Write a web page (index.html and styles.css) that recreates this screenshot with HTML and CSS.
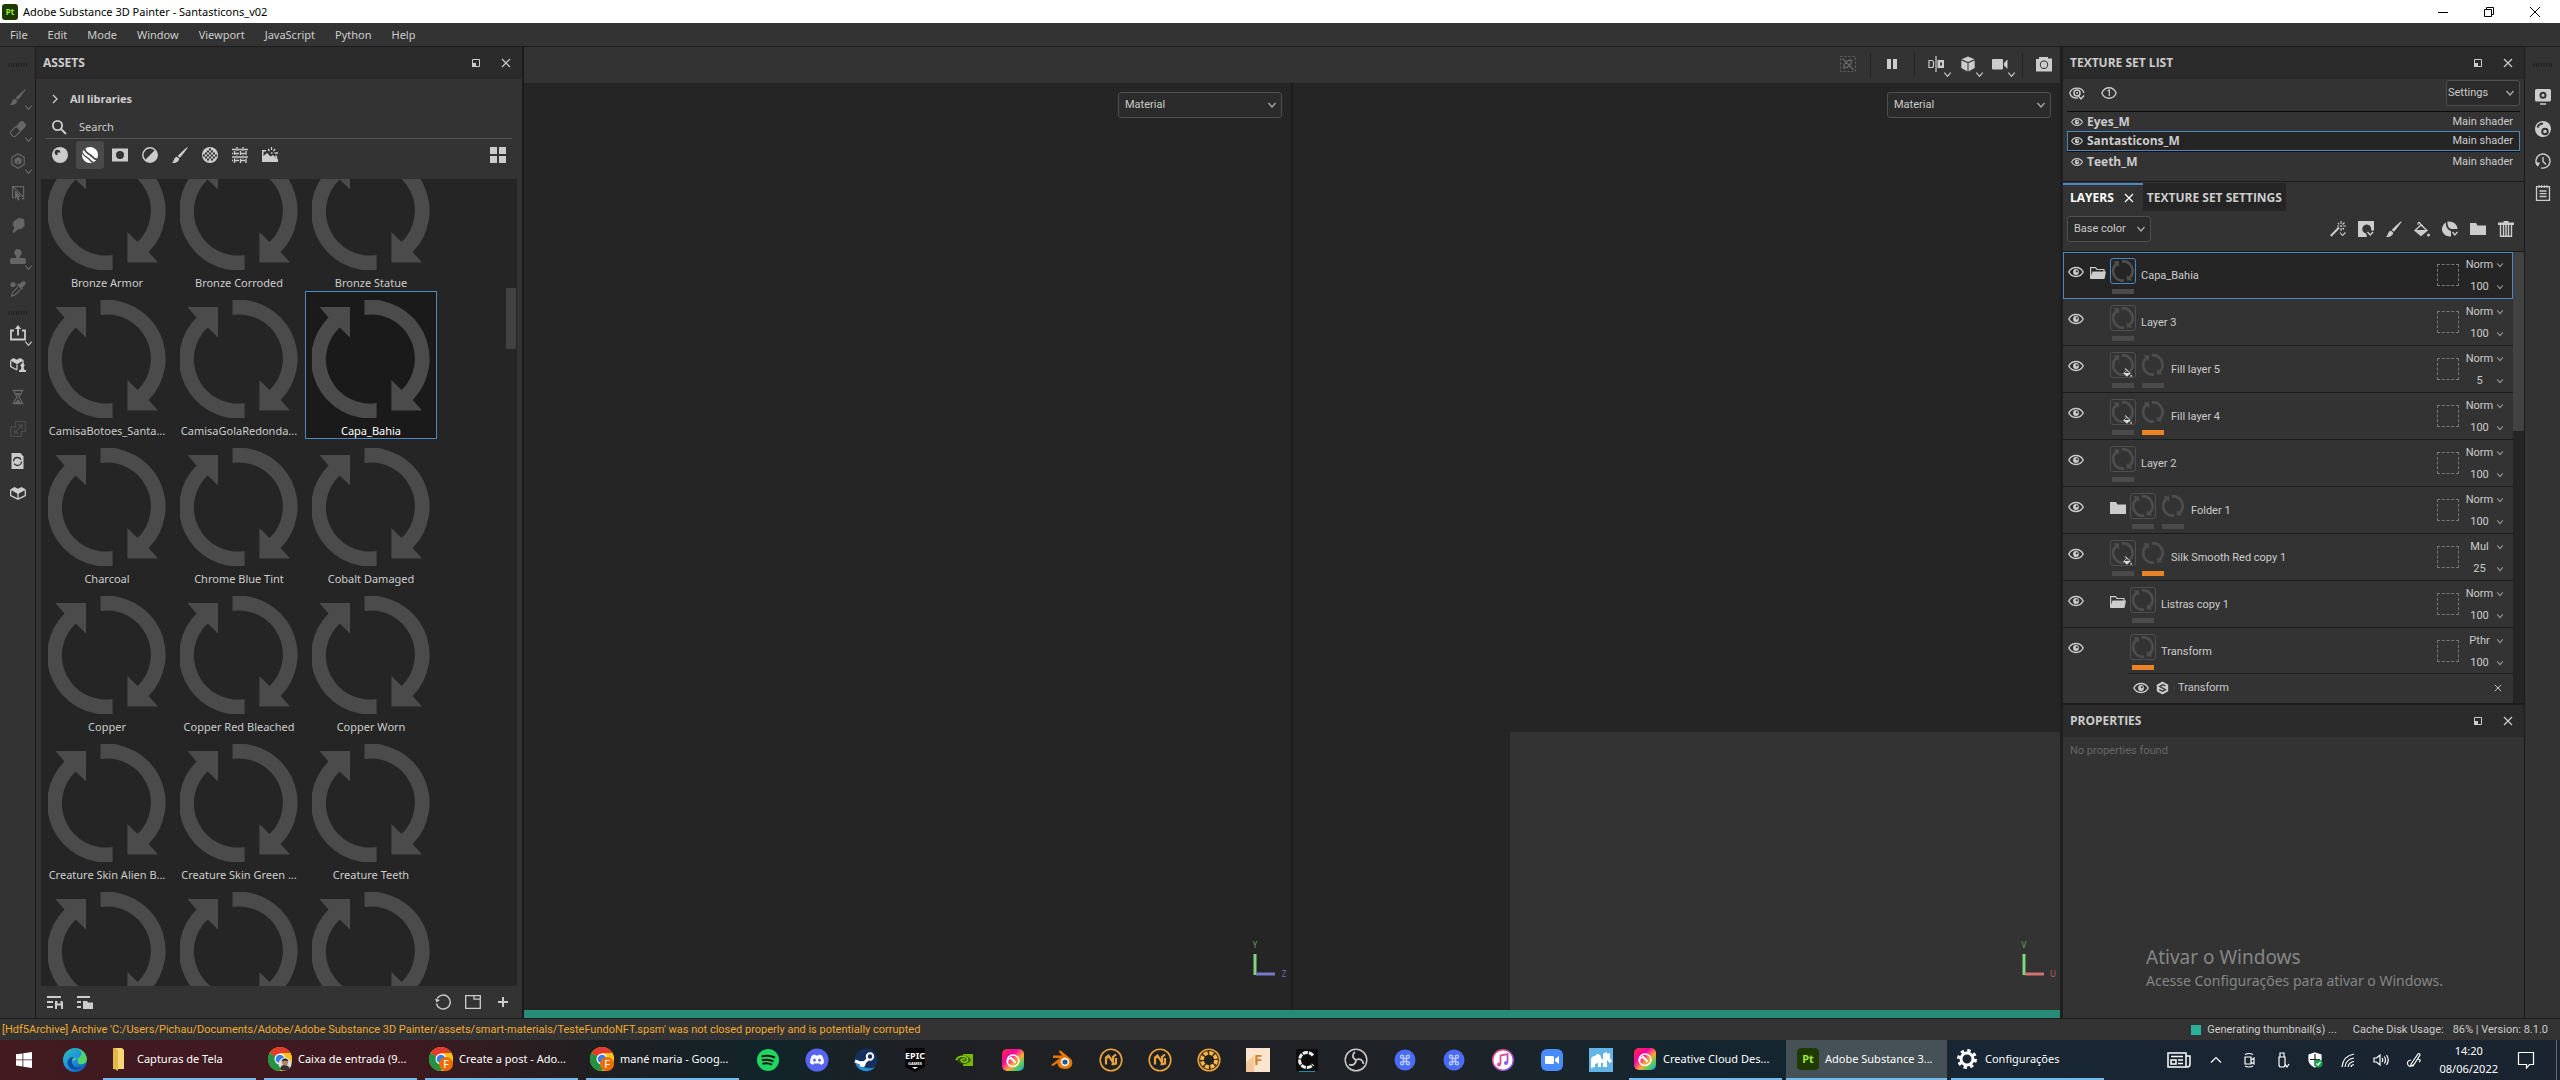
FILE: index.html
```html
<!DOCTYPE html>
<html lang="en">
<head>
  <meta charset="UTF-8" />
  <meta name="viewport" content="width=device-width, initial-scale=1.0"/>
  <title>Adobe Substance 3D Painter - Santasticons_v02</title>
  <link rel="stylesheet" href="styles.css">
</head>
<body>
  <!-- icon sprite -->
  <svg class="sprite" aria-hidden="true">
    <symbol id="i-load" viewBox="0 0 118 118"><path fill="currentColor" d="M52.5 0A59 59 0 0 1 100.7 100L110 110.5H79.4V80L89.6 90A44 44 0 0 0 52.5 15ZM64.6 118A59 59 0 0 1 16.5 17.5L7.5 7H38V37.5L27.7 27.5A44 44 0 0 0 64.6 103Z"/></symbol>
    <symbol id="i-chev" viewBox="0 0 10 10"><path d="M1.5 3l3.5 4 3.500-4" fill="none" stroke="currentColor" stroke-width="1.300"/></symbol>
    <symbol id="i-right" viewBox="0 0 10 10"><path d="M3 1l4 4-4 4" fill="none" stroke="currentColor" stroke-width="1.300"/></symbol>
    <symbol id="i-x" viewBox="0 0 10 10"><path d="M1 1l8 8M9 1l-8 8" fill="none" stroke="currentColor" stroke-width="1.200"/></symbol>
    <symbol id="i-float" viewBox="0 0 10 10"><path d="M1.500 1.500h7v7h-7z" fill="none" stroke="currentColor"/><path d="M1 5h4v4H1z" fill="currentColor"/></symbol>
    <symbol id="i-dots" viewBox="0 0 20 6"><path d="M1 0v4M3.500 0v4M6 0v4M8.500 0v4M11 0v4M13.500 0v4M16 0v4M18.500 0v4" stroke="#1f1f1f"/></symbol>
    <symbol id="i-brush" viewBox="0 0 16 16"><path fill="currentColor" d="M15.800.3c.4.4-6.300 9.200-8 10.500L5.800 9C7 7.200 15.200-.3 15.800.3zM5 9.700l2.200 2C7 15 3 16.500 0 15.700c2.200-1 1.600-5.600 5-6z"/></symbol>
    <symbol id="i-eraser" viewBox="0 0 16 16"><path fill="currentColor" d="M10.500.6a2.200 2.200 0 0 1 3 0l2 2.200a2.200 2.200 0 0 1 0 3l-4.700 5L5.600 5.500z"/><path d="M5.600 5.500L.9 10.400a1.800 1.800 0 0 0 0 2.500l2 2.200a1.800 1.800 0 0 0 2.600 0l5-4.800" fill="none" stroke="currentColor" stroke-width="1.200"/></symbol>
    <symbol id="i-proj" viewBox="0 0 16 16"><path d="M8 .8l6.200 3.600v7.200L8 15.200l-6.200-3.600V4.400z" fill="none" stroke="currentColor" stroke-width="1.200"/><path d="M8 4l3.500 2v4L8 12l-3.500-2V6z" fill="currentColor"/><path d="M8 8V12" stroke="#333"/></symbol>
    <symbol id="i-poly" viewBox="0 0 16 16"><path d="M4.500 12.500H2.600V1.600h11v12h-2M2.600 1.600l11 10.500" fill="none" stroke="currentColor" stroke-width="1.200"/><path d="M5 5.500l6.500 6.300-3 .3L9.500 15l-1.500.6-1.300-3L5 14z" fill="currentColor"/></symbol>
    <symbol id="i-smudge" viewBox="0 0 16 16"><path fill="currentColor" d="M3.500 4.500L8 1.500l1-1 1.200 1 1.600-.5.6 1 1.300-.2.600 1.700.2 5.500-3.200 3-3 .2L4 15.800l-1.700-.6L4.500 10.500 2.500 8z"/></symbol>
    <symbol id="i-stamp" viewBox="0 0 16 16"><path fill="currentColor" d="M8 0a3.700 3.700 0 0 1 2.400 6.500c-.8.800-.8 1.500-.5 2.500H14c1.500 0 2 1 2 2v1H0v-1c0-1 .5-2 2-2h4.100c.3-1 .3-1.700-.5-2.500A3.700 3.700 0 0 1 8 0zM0 12h16v1.500l-1 1.500H1l-1-1.500z"/></symbol>
    <symbol id="i-pick" viewBox="0 0 16 16"><circle cx="3" cy="3.500" r="2.600" fill="currentColor"/><path fill="currentColor" d="M12 .8c3-1.800 4.600 1.500 3 3.200l-2.600 2.500.8.900-1.400 1.300-5-5L8.200 2.500l1 .8z"/><path d="M8 6L2.500 11.500l-1 3.500 3.400-1L10.500 8.500" fill="none" stroke="currentColor" stroke-width="1.200"/></symbol>
    <symbol id="i-share" viewBox="0 0 16 16"><path d="M4 5.500H1v9h14v-9h-3M8 10.500V2" fill="none" stroke="currentColor" stroke-width="1.800"/><path d="M8 0l3.200 4H4.800z" fill="currentColor"/></symbol>
    <symbol id="i-box" viewBox="0 0 16 16"><path d="M.7 5v5.500L8 14.200l7.300-3.700V5M8 8v6" fill="none" stroke="currentColor" stroke-width="1.300"/><path d="M8 3.800L11.500 2 16 4.400 8 9 0 4.400 4.500 2z" fill="currentColor"/></symbol>
    <symbol id="i-boxuser" viewBox="0 0 16 16"><path d="M.7 4v5.500L7 13M13 4v3M7 7.500v5" fill="none" stroke="currentColor" stroke-width="1.300"/><path d="M6.700 2.800L10 1l4 2.200-7 4-7-4L3.500 1z" fill="currentColor"/><circle cx="12.500" cy="8.300" r="2" fill="currentColor"/><path d="M11.500 9h2l.5 3.500 2 .8V15H9v-1.700l2-.8z" fill="currentColor"/></symbol>
    <symbol id="i-hour" viewBox="0 0 16 16"><path d="M2.500 1.500h11M2.500 14.500h11M4 1.500c0 4 3 5 3 6.500s-3 2.500-3 6.500M12 1.500c0 4-3 5-3 6.500s3 2.500 3 6.500" fill="none" stroke="currentColor" stroke-width="1.300"/><path d="M5 4h6L8 7zM5 14l3-4 3 4z" fill="currentColor"/></symbol>
    <symbol id="i-resize" viewBox="0 0 16 16"><path d="M5.500.7h9.800v9.800h-4v4.800H.7V6h4.800zM5 11.500l6.500-7M8 4h4v4M4.500 8v4h4" fill="none" stroke="currentColor" stroke-width="1.300"/></symbol>
    <symbol id="i-docload" viewBox="0 0 16 16"><path fill="currentColor" d="M1.500 0h9l3 3.500V16h-12z"/><circle cx="7.500" cy="8.500" r="4" fill="none" stroke="#333" stroke-width="1.300" stroke-dasharray="10 2.500"/></symbol>
    <symbol id="i-search" viewBox="0 0 16 16"><circle cx="6.500" cy="6.500" r="4.600" fill="none" stroke="currentColor" stroke-width="1.800"/><path d="M10 10l5 5" stroke="currentColor" stroke-width="2"/></symbol>
    <symbol id="i-sphere" viewBox="0 0 16 16"><circle cx="8" cy="8" r="8" fill="currentColor"/><circle cx="5.500" cy="5.500" r="2.800" fill="#333"/><path d="M5.500 5.500h3v3h-3z" fill="currentColor"/></symbol>
    <symbol id="i-smart" viewBox="0 0 16 16"><circle cx="8" cy="8" r="8" fill="currentColor"/><path d="M2.500 1.500C3 6 7 6.500 9 8.500s3 4 6.500 4" fill="none" stroke="#4a4a4a" stroke-width="1.800"/><path d="M.2 5.500C2 10 6 10.500 7.500 12.500s2 2.500 4 3" fill="none" stroke="#4a4a4a" stroke-width="1.300"/></symbol>
    <symbol id="i-mask" viewBox="0 0 16 16"><path fill="currentColor" fill-rule="evenodd" d="M0 1.500h16v13H0zM8 4a4 4 0 1 0 0 8 4 4 0 0 0 0-8z"/></symbol>
    <symbol id="i-half" viewBox="0 0 16 16"><circle cx="8" cy="8" r="7.200" fill="none" stroke="currentColor" stroke-width="1.500"/><path d="M13.200 2.800A7.300 7.300 0 0 1 2.800 13.200z" fill="currentColor"/></symbol>
    <symbol id="i-check" viewBox="0 0 16 16"><circle cx="8" cy="8" r="8" fill="currentColor"/><path d="M3 5.500h2v2H3zM7 5.500h2v2H7zM11 5.500h2v2h-2zM5 3.500h2v2H5zM9 3.500h2v2H9zM5 7.500h2v2H5zM9 7.500h2v2H9zM1 7.500h2v2H1zM13 7.500h2v2h-2zM3 9.500h2v2H3zM7 9.500h2v2H7zM11 9.500h2v2h-2zM5 11.500h2v2H5zM9 11.500h2v2H9zM7 1.500h2v2H7z" fill="#333"/></symbol>
    <symbol id="i-weave" viewBox="0 0 16 16"><path d="M0 2.500h4M6 2.500h4M12 2.500h4M0 6.500h1M3 6.500h4M9 6.500h4M0 10h4M6 10h4M12 10h4M0 13.500h1M3 13.500h4M9 13.500h4M2.500 4v4M5 0v4M5 8.500v3M8.500 4v4M11 0v4M11 8.500v3M14 4v4M2.500 11.500V16M8.500 11.500V16M14 11.500V16" stroke="currentColor" stroke-width="1.400"/></symbol>
    <symbol id="i-env" viewBox="0 0 16 16"><path fill="currentColor" d="M0 3h4v1.500H1.500V9L5 6l3.500 3.500L11 8l5 4.500V15H0z"/><path d="M14.500 10v4M9.500 0v3M6 2l1.500 2M13 2l-1.500 2M12.500 6H16M9 6h1.500M13.500 8.500l1.500 1.500" stroke="currentColor" stroke-width="1.300"/></symbol>
    <symbol id="i-grid4" viewBox="0 0 16 16"><path fill="currentColor" d="M0 0h7v7H0zM9 0h7v7H9zM0 9h7v7H0zM9 9h7v7H9z"/></symbol>
    <symbol id="i-listsave" viewBox="0 0 16 16"><path fill="currentColor" d="M0 2h14v2H0zM0 7h6v2H0zM0 12h6v2H0zM8 7h7l1 1v7H8z"/><path fill="#333" d="M10.500 7h3v2.500h-3zM10 11.500h4V15h-4z"/></symbol>
    <symbol id="i-listdir" viewBox="0 0 16 16"><path fill="currentColor" d="M0 2h13v2H0zM0 7h4v2H0zM0 12h4v2H0zM6 7h4l1 1.500h5V15H6z"/></symbol>
    <symbol id="i-reload" viewBox="0 0 16 16"><path d="M2.200 4.500a7 7 0 1 1-.8 5" fill="none" stroke="currentColor" stroke-width="1.400"/><path d="M0 4.500l1.500 4L5 6z" fill="currentColor"/></symbol>
    <symbol id="i-newwin" viewBox="0 0 16 16"><path d="M.7 1.700h14.600v12.600H.7zM9 1.700v3.500h6" fill="none" stroke="currentColor" stroke-width="1.300"/></symbol>
    <symbol id="i-plus" viewBox="0 0 16 16"><path d="M8 3v10M3 8h10" stroke="currentColor" stroke-width="2"/></symbol>
    <symbol id="i-nopen" viewBox="0 0 16 16"><path d="M.5.500h15v15H.5z" fill="none" stroke="currentColor" stroke-dasharray="2 2"/><path d="M2.500 2.500l11 11M4 12c-.5-5 3-8 7.500-8 .5 4-3 8-7.500 8z" fill="none" stroke="currentColor" stroke-width="1.400"/></symbol>
    <symbol id="i-pause" viewBox="0 0 16 16"><path fill="currentColor" d="M3 3h4v10H3zM9 3h4v10H9z"/></symbol>
    <symbol id="i-sym" viewBox="0 0 16 16"><path d="M1 4.500h2.500a2 2 0 0 1 2 2v3a2 2 0 0 1-2 2H1zM8 0v16" fill="none" stroke="currentColor" stroke-width="1.200"/><path fill="currentColor" fill-rule="evenodd" d="M9.500 4H16v8H9.500zM12 6.500v3h2v-3z"/></symbol>
    <symbol id="i-cube" viewBox="0 0 16 16"><path fill="currentColor" d="M8 .5l6.500 2.700L8 6 1.500 3.200zM1.300 4.500L7.500 7v8.500l-6.200-3.500zM14.700 4.500L8.500 7v8.500l6.200-3.500z"/></symbol>
    <symbol id="i-cam" viewBox="0 0 16 16"><rect y="3" width="11" height="10.500" rx="1" fill="currentColor"/><path fill="currentColor" d="M12 7l3.500-3.500v9.500L12 9.500z"/></symbol>
    <symbol id="i-photo" viewBox="0 0 16 16"><path fill="currentColor" fill-rule="evenodd" d="M0 3h3V1h9v1.500h4v13H0zM8 4.500a4.200 4.200 0 1 0 0 8.400 4.200 4.200 0 0 0 0-8.400z"/><circle cx="8" cy="8.700" r="3.200" fill="currentColor"/></symbol>
    <symbol id="i-eye" viewBox="0 0 16 16"><path d="M.8 8C3.800 2 12.200 2 15.200 8 12.200 14 3.800 14 .8 8z" fill="none" stroke="currentColor" stroke-width="1.400"/><circle cx="8" cy="8" r="2.900" fill="currentColor"/><circle cx="8.800" cy="7.300" r="1.100" fill="#333"/></symbol>
    <symbol id="i-eyes" viewBox="0 0 16 16"><path d="M9 13C4 13.500 1.500 10.500.8 8 3 1.500 13 1.500 15 8" fill="none" stroke="currentColor" stroke-width="1.300"/><circle cx="8" cy="8" r="3" fill="none" stroke="currentColor" stroke-width="1.500"/><circle cx="8" cy="8" r="1" fill="currentColor"/><path d="M9.500 11l2.500 3 3-3.500" fill="none" stroke="currentColor" stroke-width="1.400"/></symbol>
    <symbol id="i-eye1" viewBox="0 0 16 16"><path d="M.8 8C3.800 1 12.200 1 15.200 8 12.200 15 3.800 15 .8 8z" fill="none" stroke="currentColor" stroke-width="1.300"/><path d="M6.500 6L8.300 5v6" fill="none" stroke="currentColor" stroke-width="1.200"/></symbol>
    <symbol id="i-wand" viewBox="0 0 16 16"><path d="M.8 15L9 6.500" stroke="currentColor" stroke-width="2"/><path d="M11 0v3M11 7v3M7 5h2M13 5h3M7.800 1.800l1.500 1.500M14.500 1.500l-2 2M14 8.500l-1.500-1.500M10 11.500l2.500 3 3-3" fill="none" stroke="currentColor" stroke-width="1.100"/><circle cx="11" cy="5" r="1" fill="currentColor"/></symbol>
    <symbol id="i-maskadd" viewBox="0 0 16 16"><path fill="currentColor" d="M0 0h16v9.500h-3A4.500 4.500 0 1 0 8 12.500l1 3.500H0z"/><path d="M9.500 11l2.700 3 2.800-3" fill="none" stroke="currentColor" stroke-width="1.500"/></symbol>
    <symbol id="i-bucket" viewBox="0 0 16 16"><path d="M7 4L13 9.500 7 14.500 1 9.500z M4.500 1l5 5" fill="none" stroke="currentColor" stroke-width="1.300"/><path d="M1 9h12l-6 6z" fill="currentColor"/><path d="M4 4V1.500h2" fill="none" stroke="currentColor"/><circle cx="14.500" cy="14" r="1.500" fill="currentColor"/></symbol>
    <symbol id="i-smartadd" viewBox="0 0 16 16"><path fill="currentColor" d="M5.500.5C11 0 15.500 3 15.500 8H9C6.500 7 5 4 5.500.500zM4 1.500C3.500 6 6 9 9 10v5.500C2.500 16 0 11 0 8c0-3 2-5.500 4-6.500z"/><path d="M10.500 11l2.300 3 2.700-3" fill="none" stroke="currentColor" stroke-width="1.400"/></symbol>
    <symbol id="i-folder" viewBox="0 0 16 16"><path fill="currentColor" d="M0 2h6l1.500 2.500H16V14H0z"/></symbol>
    <symbol id="i-open" viewBox="0 0 16 16"><path d="M.6 13V2.600h5L7 4.500h7V7" fill="none" stroke="currentColor" stroke-width="1.200"/><path fill="currentColor" d="M2.500 6.500H16L14.500 14H0z"/></symbol>
    <symbol id="i-trash" viewBox="0 0 16 16"><path fill="currentColor" d="M0 1.500h5.500V0h5v1.500H16V4H0z"/><path d="M2.500 4v11.200h11V4M5.500 4v11M8 4v11M10.500 4v11" fill="none" stroke="currentColor" stroke-width="1.400"/></symbol>
    <symbol id="i-sub" viewBox="0 0 16 16"><path fill="currentColor" d="M8 0l7 4v8l-7 4-7-4V4z"/><path d="M11.500 5.500L8 4 4.500 6 11.500 10 8 12l-4-2" fill="none" stroke="#333" stroke-width="1.600"/></symbol>
    <symbol id="i-display" viewBox="0 0 16 16"><rect y="0" width="16" height="12.500" rx="1.500" fill="currentColor"/><path d="M5 15h6" stroke="currentColor" stroke-width="1.500"/><circle cx="8" cy="6.300" r="2.500" fill="none" stroke="#333" stroke-width="2"/></symbol>
    <symbol id="i-shader" viewBox="0 0 16 16"><circle cx="8" cy="8" r="8" fill="currentColor"/><path d="M2.500 6.500Q4 2.500 8 2.500" stroke="#333" stroke-width="2" fill="none"/><circle cx="10" cy="10.500" r="2.800" fill="none" stroke="#333" stroke-width="2"/></symbol>
    <symbol id="i-history" viewBox="0 0 16 16"><path d="M3 13A7 7 0 1 1 6 14.800M8 4v4.500l3 3" fill="none" stroke="currentColor" stroke-width="1.400"/><path d="M0 9.500h5l-2 4z" fill="currentColor"/></symbol>
    <symbol id="i-log" viewBox="0 0 16 16"><path d="M1.500 1.700h13v13.600h-13zM4.500 6h7M4.500 8.700h7M4.500 11.500h7" fill="none" stroke="currentColor" stroke-width="1.300"/><path d="M4 0v3M6.700 0v3M9.300 0v3M12 0v3" stroke="currentColor"/></symbol>

    <!-- taskbar -->
    <symbol id="t-chrome" viewBox="0 0 24 24"><circle cx="12" cy="12" r="12" fill="#fbc116"/><path d="M12 12L1.600 6A12 12 0 0 1 22.400 6H12z" fill="#e33b2e"/><path d="M12 12L1.600 6A12 12 0 0 0 12 24l5.200-9z" fill="#229342"/><path d="M22.400 6H12v6l5.200 3L12 24A12 12 0 0 0 22.400 6z" fill="#fbc116"/><circle cx="12" cy="12" r="5.500" fill="#fff"/><circle cx="12" cy="12" r="4.300" fill="#3a7de8"/></symbol>
    <symbol id="t-cc" viewBox="0 0 24 24"><rect x="1" y="1" width="22" height="22" rx="5" fill="url(#g-cc)"/><path d="M12 12m-6 1a6 6 0 1 1 12 0 6 6 0 0 1-6 5.500c-3.500 0-6-2.500-6-5.500z" fill="none" stroke="#fff" stroke-width="1.500"/><path d="M14.500 15L10 10.500a2.500 2.500 0 0 0-3 3.500M9.500 9l5 5" fill="none" stroke="#fff" stroke-width="1.600"/></symbol>
    <symbol id="t-n" viewBox="0 0 24 24"><circle cx="12" cy="12" r="10.800" fill="none" stroke="#e8a33d" stroke-width="1.600"/><path d="M7 16.500V9.500l2.500-2 4.500 7V9l3-2.500M6.500 10l3-1M12.500 16.500l4.500-1V10" fill="none" stroke="#e8a33d" stroke-width="2.200"/></symbol>
    <symbol id="t-cmd" viewBox="0 0 24 24"><circle cx="12" cy="12" r="10.500" fill="#4a6cf5"/><path d="M10.500 7v10M13.500 7v10" stroke="#b9c8ff" stroke-width="1.300"/><path d="M10.500 8.500c-1-2-3-1.500-3 0s1.500 2 3 2h3c1.500 0 3-.5 3-2s-2-2-3 0M10.500 15.500c-1 2-3 1.500-3 0s1.500-2 3-2h3c1.500 0 3 .5 3 2s-2 2-3 0" fill="none" stroke="#b9c8ff" stroke-width="1.300"/></symbol>
    <defs>
      <linearGradient id="g-cc" x2="1" y2="1"><stop offset="0" stop-color="#f33"/><stop offset=".35" stop-color="#f0a"/><stop offset=".6" stop-color="#fa3"/><stop offset=".8" stop-color="#4c6"/><stop offset="1" stop-color="#38f"/></linearGradient>
      <linearGradient id="g-edge" x2="1" y2="1"><stop offset="0" stop-color="#2cc4b0"/><stop offset=".5" stop-color="#1f8fe0"/><stop offset="1" stop-color="#0c4ea8"/></linearGradient>
      <linearGradient id="g-tunes" x2="1" y2="1"><stop offset="0" stop-color="#fb4a7b"/><stop offset="1" stop-color="#7a5cf0"/></linearGradient>
    </defs>
  </svg>

  <header class="titlebar">
    <svg class="pt-logo" viewBox="0 0 16 16"><rect width="16" height="16" rx="3" fill="#1f3a00"/><text x="8" y="11" text-anchor="middle">Pt</text></svg>
    <span class="title">Adobe Substance 3D Painter - Santasticons_v02</span>
    <button aria-label="Minimize"><svg viewBox="0 0 12 12"><path d="M1 6.500h10"/></svg></button>
    <button aria-label="Restore"><svg viewBox="0 0 12 12"><path d="M1.500 3.500h7v7h-7zM3.500 3.500v-2h7v7h-2"/></svg></button>
    <button aria-label="Close"><svg viewBox="0 0 12 12"><path d="M1 1l10 10M11 1L1 11"/></svg></button>
  </header>

  <nav class="menubar">
    <button>File</button><button>Edit</button><button>Mode</button><button>Window</button><button>Viewport</button><button>JavaScript</button><button>Python</button><button>Help</button>
  </nav>

  <main class="workspace">
    <aside class="rail tools" id="tools"></aside>

    <section class="panel assets">
      <div class="panel-head">
        <h2>ASSETS</h2>
        <button aria-label="Float"><svg><use href="#i-float"/></svg></button>
        <button aria-label="Close"><svg class="x"><use href="#i-x"/></svg></button>
      </div>
      <button class="libraries"><svg><use href="#i-right"/></svg>All libraries</button>
      <div class="search">
        <svg><use href="#i-search"/></svg>
        <input type="text" placeholder="Search" aria-label="Search" />
      </div>
      <div class="filters">
        <button aria-label="Materials"><svg><use href="#i-sphere"/></svg></button>
        <button aria-label="Smart materials" class="on"><svg><use href="#i-smart"/></svg></button>
        <button aria-label="Smart masks"><svg><use href="#i-mask"/></svg></button>
        <button aria-label="Filters"><svg><use href="#i-half"/></svg></button>
        <button aria-label="Brushes"><svg><use href="#i-brush"/></svg></button>
        <button aria-label="Alphas"><svg><use href="#i-check"/></svg></button>
        <button aria-label="Textures"><svg><use href="#i-weave"/></svg></button>
        <button aria-label="Environments"><svg><use href="#i-env"/></svg></button>
        <button aria-label="View mode" class="end"><svg><use href="#i-grid4"/></svg></button>
      </div>
      <div class="shelf">
        <div class="shelf-grid" id="shelf"></div>
        <div class="scroll"></div>
      </div>
      <div class="assets-foot">
        <button aria-label="Save list"><svg><use href="#i-listsave"/></svg></button>
        <button aria-label="Open list"><svg><use href="#i-listdir"/></svg></button>
        <button aria-label="Reload" class="end"><svg><use href="#i-reload"/></svg></button>
        <button aria-label="New window"><svg><use href="#i-newwin"/></svg></button>
        <button aria-label="Import"><svg><use href="#i-plus"/></svg></button>
      </div>
    </section>

    <section class="stage">
      <div class="stage-bar">
        <button aria-label="Pen" class="dim"><svg><use href="#i-nopen"/></svg></button>
        <i class="sep"></i>
        <button aria-label="Pause"><svg><use href="#i-pause"/></svg></button>
        <i class="sep"></i>
        <button aria-label="Symmetry"><svg><use href="#i-sym"/></svg><svg class="more"><use href="#i-chev"/></svg></button>
        <button aria-label="Display"><svg><use href="#i-cube"/></svg><svg class="more"><use href="#i-chev"/></svg></button>
        <button aria-label="Camera"><svg><use href="#i-cam"/></svg><svg class="more"><use href="#i-chev"/></svg></button>
        <i class="sep"></i>
        <button aria-label="Render"><svg><use href="#i-photo"/></svg></button>
      </div>
      <div class="views">
        <div class="view">
          <span class="drop wide"><select aria-label="3D view channel"><option>Material</option></select><svg><use href="#i-chev"/></svg></span>
          <svg class="axis" viewBox="0 0 50 50"><path d="M14 19v21" stroke="#7fd67f" stroke-width="3"/><path d="M15 39h19" stroke="#7a78c8" stroke-width="3"/><text x="14" y="13" fill="#5fa35f">Y</text><text x="43" y="42" fill="#6a6ab8">Z</text></svg>
        </div>
        <div class="view">
          <div class="uv-tile"></div>
          <span class="drop wide"><select aria-label="2D view channel"><option>Material</option></select><svg><use href="#i-chev"/></svg></span>
          <svg class="axis" viewBox="0 0 50 50"><path d="M14 19v21" stroke="#7fd67f" stroke-width="3"/><path d="M15 39h19" stroke="#cf7272" stroke-width="3"/><text x="14" y="13" fill="#5fa35f">V</text><text x="43" y="42" fill="#c06060">U</text></svg>
        </div>
      </div>
      <div class="progress"></div>
    </section>

    <aside class="side">
      <section class="panel sets">
        <div class="panel-head">
          <h2>TEXTURE SET LIST</h2>
          <button aria-label="Float"><svg><use href="#i-float"/></svg></button>
          <button aria-label="Close"><svg class="x"><use href="#i-x"/></svg></button>
        </div>
        <div class="sets-bar">
          <button aria-label="Show all"><svg><use href="#i-eyes"/></svg></button>
          <button aria-label="Solo"><svg><use href="#i-eye1"/></svg></button>
          <span class="drop settings"><select aria-label="Settings"><option>Settings</option></select><svg><use href="#i-chev"/></svg></span>
        </div>
        <ul class="set-list">
          <li><svg><use href="#i-eye"/></svg><b>Eyes_M</b><span>Main shader</span></li>
          <li class="on"><svg><use href="#i-eye"/></svg><b>Santasticons_M</b><span>Main shader</span></li>
          <li><svg><use href="#i-eye"/></svg><b>Teeth_M</b><span>Main shader</span></li>
        </ul>
      </section>

      <section class="panel layers">
        <div class="tabs">
          <button class="tab on">LAYERS<svg><use href="#i-x"/></svg></button>
          <button class="tab">TEXTURE SET SETTINGS</button>
        </div>
        <div class="layers-bar">
          <span class="drop channel"><select aria-label="Channel"><option>Base color</option></select><svg><use href="#i-chev"/></svg></span>
          <button aria-label="Add effect"><svg><use href="#i-wand"/></svg></button>
          <button aria-label="Add mask"><svg><use href="#i-maskadd"/></svg></button>
          <button aria-label="Add layer"><svg><use href="#i-brush"/></svg></button>
          <button aria-label="Add fill layer"><svg><use href="#i-bucket"/></svg></button>
          <button aria-label="Add smart material"><svg><use href="#i-smartadd"/></svg></button>
          <button aria-label="Add folder"><svg><use href="#i-folder"/></svg></button>
          <button aria-label="Delete"><svg><use href="#i-trash"/></svg></button>
        </div>
        <div class="layer-scroll">
          <div class="layer-list" id="layers"></div>
          <div class="scroll"></div>
        </div>
      </section>

      <section class="panel props">
        <div class="panel-head">
          <h2>PROPERTIES</h2>
          <button aria-label="Float"><svg><use href="#i-float"/></svg></button>
          <button aria-label="Close"><svg class="x"><use href="#i-x"/></svg></button>
        </div>
        <p class="empty">No properties found</p>
        <div class="activate">
          <p class="big">Ativar o Windows</p>
          <p>Acesse Configurações para ativar o Windows.</p>
        </div>
      </section>
    </aside>

    <aside class="rail right">
      <svg class="dots"><use href="#i-dots"/></svg>
      <button aria-label="Display settings"><svg><use href="#i-display"/></svg></button>
      <button aria-label="Shader settings"><svg><use href="#i-shader"/></svg></button>
      <button aria-label="History"><svg><use href="#i-history"/></svg></button>
      <button aria-label="Log"><svg><use href="#i-log"/></svg></button>
    </aside>
  </main>

  <div class="statusbar">
    <span class="warn">[Hdf5Archive] Archive 'C:/Users/Pichau/Documents/Adobe/Adobe Substance 3D Painter/assets/smart-materials/TesteFundoNFT.spsm' was not closed properly and is potentially corrupted</span>
    <i class="busy"></i>
    <span class="job">Generating thumbnail(s) ...</span>
    <span class="cache">Cache Disk Usage:</span>
    <span>86% | Version: 8.1.0</span>
  </div>

  <footer class="taskbar">
    <button class="start" aria-label="Start"><svg viewBox="0 0 16 16"><path fill="#fff" d="M0 2.300L6.500 1.400V7.500H0zM7.300 1.300L16 0v7.500H7.300zM0 8.300h6.500v6.200L0 13.600zM7.300 8.300H16V16l-8.700-1.300z"/></svg></button>
    <button class="app" aria-label="Edge"><svg viewBox="0 0 24 24"><circle cx="12" cy="12" r="12" fill="url(#g-edge)"/><path d="M9 13c0-3 5-4 6-1 .5 1.500-.8 2.300 0 3.200 2 2 6.500.8 8-1A12 12 0 0 0 24 11C23 4 17 0 12 0 20 1 22 9 9 13z" fill="#52d36b"/><path d="M9 12c-1 6 4 9 10 7-3 4-11 4-14-2-1.500-4 1-8 5-8z" fill="#0d4f9e"/></svg></button>
    <button class="task"><svg viewBox="0 0 24 24"><path fill="#f7d774" d="M6 1h9l2 2v19H6z"/><path fill="#e5b64a" d="M6 1h3l2 3v20l-5-3z"/></svg>Capturas de Tela</button>
    <button class="task"><svg viewBox="0 0 24 24"><use href="#t-chrome"/><circle cx="17" cy="17" r="6.500" fill="#ddd"/><path d="M12 22c1-4 3-4 5-4s4 1 5 4c-3 2-7 2-10 0z" fill="#333"/><circle cx="17" cy="15.500" r="3" fill="#b58463"/><path d="M13.500 14.500c1-4 6-4 7 0-2-1.500-5-1.500-7 0z" fill="#221"/></svg>Caixa de entrada (9...</button>
    <button class="task"><svg viewBox="0 0 24 24"><use href="#t-chrome"/><circle cx="17" cy="17" r="7" fill="#ef6c00"/><text x="17" y="21" text-anchor="middle">F</text></svg>Create a post - Ado...</button>
    <button class="task"><svg viewBox="0 0 24 24"><use href="#t-chrome"/><circle cx="17" cy="17" r="7" fill="#ef6c00"/><text x="17" y="21" text-anchor="middle">F</text></svg>mané maria - Goog...</button>
    <button class="app" aria-label="Spotify"><svg viewBox="0 0 24 24"><circle cx="12" cy="12" r="11" fill="#1ed760"/><path d="M5.500 8.500c5-1.400 9.500-1 13.500 1.200M6 12.300c4.300-1.200 8-.8 11.500 1M6.500 15.800c3.500-1 6.500-.6 9.500.9" fill="none" stroke="#111" stroke-width="2"/></svg></button>
    <button class="app" aria-label="Discord"><svg viewBox="0 0 24 24"><circle cx="12" cy="12" r="11.500" fill="#5865f2"/><path fill="#fff" fill-rule="evenodd" d="M7 7.500l3-1 .6 1h2.800l.6-1 3 1c1.500 2.500 2 5 2 7.500L16 17l-1-1.500H9L8 17l-3-2c0-2.500.5-5 2-7.500zM9.500 10.500a1.400 1.600 0 1 0 0 3.200 1.400 1.600 0 0 0 0-3.200zM14.500 10.500a1.400 1.600 0 1 0 0 3.200 1.400 1.600 0 0 0 0-3.200z"/></svg></button>
    <button class="app" aria-label="Steam"><svg viewBox="0 0 24 24"><circle cx="12" cy="12" r="11.500" fill="#14305c"/><path d="M1 14a11.500 11.500 0 0 0 20 5c-7 3-13 0-20-5z" fill="#2a8fd0"/><path d="M1 13l8 3 6-6" fill="none" stroke="#fff" stroke-width="3"/><circle cx="16" cy="8.500" r="3.200" fill="#14305c" stroke="#fff" stroke-width="2"/><circle cx="8.500" cy="16" r="3" fill="#fff"/></svg></button>
    <button class="app" aria-label="Epic Games"><svg viewBox="0 0 24 24"><path fill="#060606" d="M2 2q0-2 2-2h16q2 0 2 2v17l-10 5-10-5z"/><text class="epic" x="12" y="11" text-anchor="middle">EPIC</text><text class="games" x="12" y="16.500" text-anchor="middle">GAMES</text><path d="M9 19h6l-3 2z" fill="#fff"/></svg></button>
    <button class="app" aria-label="Nvidia"><svg viewBox="0 0 24 24"><path fill="#76b900" d="M11 6h10v12H11z"/><path d="M4 12c4-6 11-6 15 0-4 5-10 6-15 0z" fill="#2a4a00"/><path d="M4 12c3-5 10-5 12 0-2 3-6 3-7 0 1-1 3-2 4 0" fill="none" stroke="#8fd400" stroke-width="1.500"/></svg></button>
    <button class="app" aria-label="Creative Cloud"><svg><use href="#t-cc"/></svg></button>
    <button class="app" aria-label="Blender"><svg viewBox="0 0 24 24"><path fill="#ea7600" d="M10 2l11 9c3 4 1 10-6 10-5 0-7.500-3-7.500-6L3 18l-2-1 9-7H3V7.500h9L9 4z"/><circle cx="15" cy="14" r="4.300" fill="#fff"/><circle cx="15" cy="14" r="2.600" fill="#265787"/></svg></button>
    <button class="app" aria-label="Nomad"><svg><use href="#t-n"/></svg></button>
    <button class="app" aria-label="Nomad tools"><svg><use href="#t-n"/></svg></button>
    <button class="app" aria-label="Aperture"><svg viewBox="0 0 24 24"><circle cx="12" cy="12" r="10.800" fill="#3a2a10" stroke="#e8a33d" stroke-width="1.600"/><circle cx="12" cy="12" r="7" fill="none" stroke="#f5b94a" stroke-width="4" stroke-dasharray="4 1.500"/><circle cx="12" cy="12" r="5" fill="#222"/></svg></button>
    <button class="app" aria-label="Fusion 360"><svg viewBox="0 0 24 24"><path fill="#fbe5cf" d="M0 0h24v24H0z"/><path fill="#f3c79c" d="M0 14l8-6v16H0z"/><text class="fusion" x="12" y="17" text-anchor="middle">F</text></svg></button>
    <button class="app" aria-label="Capture"><svg viewBox="0 0 24 24"><path fill="#0c0c0c" d="M1 1h22v22H1z"/><path d="M18 7.500A7.500 7.500 0 1 0 18 16.500" fill="none" stroke="#eee" stroke-width="3" stroke-dasharray="5 1"/><path d="M4 23.500h16" stroke="#1b8fb0"/></svg></button>
    <button class="app" aria-label="OBS"><svg viewBox="0 0 24 24"><circle cx="12" cy="12" r="10.800" fill="#1c1c1e" stroke="#c8c8c8" stroke-width="1.500"/><path d="M12 12c-4-2-4-6-1-8M12 12c4-2 7 0 7.500 4M12 12c0 4-3 6-7 4.500" fill="none" stroke="#c8c8c8" stroke-width="1.800"/></svg></button>
    <button class="app" aria-label="Command"><svg><use href="#t-cmd"/></svg></button>
    <button class="app" aria-label="Command two"><svg><use href="#t-cmd"/></svg></button>
    <button class="app" aria-label="iTunes"><svg viewBox="0 0 24 24"><circle cx="12" cy="12" r="10.300" fill="#fff" stroke="url(#g-tunes)" stroke-width="1.500"/><path d="M9.500 16V7.500l7-1.500v8.500" fill="none" stroke="url(#g-tunes)" stroke-width="1.800"/><circle cx="8" cy="16.500" r="2" fill="#e0509a"/><circle cx="15" cy="15" r="2" fill="#8a5ce8"/></svg></button>
    <button class="app" aria-label="Zoom"><svg viewBox="0 0 24 24"><rect x="1" y="1" width="22" height="22" rx="6" fill="#4a8cff"/><path fill="#fff" d="M5 8h7.500q1.500 0 1.500 1.500V16H6.500Q5 16 5 14.500zM15 11l4-3v8l-4-3z"/></svg></button>
    <button class="app" aria-label="Photos"><svg viewBox="0 0 24 24"><path fill="#64b5e6" d="M0 0h24v24H0z"/><path fill="#fff" d="M2 20V12q0-4 4-4l2-2q4 0 4 4l2 2V6l3-2 2 2 2-1v5l2 3-2 2-3-3v7h-4v-4h-2v4H9v-4l-3 1v3z"/></svg></button>
    <button class="task"><svg><use href="#t-cc"/></svg>Creative Cloud Des...</button>
    <button class="task active"><svg class="pt-logo" viewBox="0 0 16 16"><rect width="16" height="16" rx="3" fill="#1f3a00"/><text x="8" y="11" text-anchor="middle">Pt</text></svg>Adobe Substance 3...</button>
    <button class="task"><svg viewBox="0 0 24 24"><circle cx="12" cy="12" r="6" fill="none" stroke="#fff" stroke-width="3"/><circle cx="12" cy="12" r="8.500" fill="none" stroke="#fff" stroke-width="3" stroke-dasharray="3.340 3.340"/></svg>Configurações</button>

    <div class="tray">
      <svg class="news" viewBox="0 0 24 16"><path d="M1 1h18v14H1zM19 4h4v8q0 3-3 3h-2M4 4.500h12M4 8h5v4H4zM11 8h5M11 11.500h5" fill="none" stroke="#fff" stroke-width="1.500"/></svg>
      <svg viewBox="0 0 16 16"><path d="M3 10.500l5-5 5 5"/></svg>
      <svg viewBox="0 0 16 16"><path d="M4 5h6v7H4zM10 8l3-2v6l-3-2M4 2.500Q8 .5 12 2.500M4 14Q8 16 12 14"/></svg>
      <svg viewBox="0 0 16 16"><path d="M5 5h6v8q0 2-2 2H7q-2 0-2-2zM6 5V1h4v4M11 12l2 3 2-3"/></svg>
      <svg viewBox="0 0 16 16"><path class="shield" d="M8 1l6 2v5q0 4-6 7-6-3-6-7V3z"/><path class="cross" d="M8 2v12M3 7.500h10"/><circle class="ok" cx="11.500" cy="11.500" r="4"/><path d="M9.500 11.500l1.500 1.500 2.500-3"/></svg>
      <svg viewBox="0 0 16 16"><path d="M2 15Q3 4 14 2M5 15q1-8 9-9M8 15q1-5 6-5.500M11 15q0-2 3-2.500"/></svg>
      <svg viewBox="0 0 16 16"><path d="M1 6h2.500L7 3v10l-3.500-3H1zM9 6q1.500 2 0 4M11.300 4.500q2.500 3.500 0 7M13.500 3q3.500 5 0 10"/></svg>
      <svg viewBox="0 0 16 16"><path d="M5 12L12 2q2-1 2 1L7 14q-3 0-2-2zM5 8Q0 9 2 13q2 3 6-1M12 7q4 1 1 3"/></svg>
      <div class="clock"><span>14:20</span><span>08/06/2022</span></div>
      <svg class="note" viewBox="0 0 18 18"><path d="M1.500 1.500h15v12h-4l-3 3.500v-3.500h-8z"/></svg>
      <i class="peek"></i>
    </div>
  </footer>

  <script>
    const icon = (name, cls = "") => `<svg class="${cls}"><use href="#i-${name}"/></svg>`;

    // left tool rail: [icon, label, enabled, has submenu]
    const tools = [
      ["brush", "Paint", 0, 1], ["eraser", "Eraser", 0, 1], ["proj", "Projection", 0, 1],
      ["poly", "Polygon fill", 0, 0], ["smudge", "Smudge", 0, 0], ["stamp", "Clone", 0, 1],
      ["pick", "Picker", 0, 0], null,
      ["share", "Export", 1, 1], ["boxuser", "Share assets", 1, 0], ["hour", "Waiting", 0, 0],
      ["resize", "Resources", -1, 0], ["docload", "Updater", 1, 0], ["box", "Library", 1, 0]
    ];
    document.getElementById("tools").innerHTML = icon("dots", "dots") + tools.map(t => t
      ? `<button aria-label="${t[1]}" class="${t[2] > 0 ? "" : t[2] < 0 ? "off" : "dim"}">${icon(t[0])}${t[3] ? icon("chev", "more") : ""}</button>`
      : icon("dots", "dots mid")).join("");

    // asset shelf
    const assets = [
      "Bronze Armor", "Bronze Corroded", "Bronze Statue",
      "CamisaBotoes_Santa...", "CamisaGolaRedonda...", "Capa_Bahia",
      "Charcoal", "Chrome Blue Tint", "Cobalt Damaged",
      "Copper", "Copper Red Bleached", "Copper Worn",
      "Creature Skin Alien B...", "Creature Skin Green ...", "Creature Teeth",
      "", "", ""
    ];
    document.getElementById("shelf").innerHTML = assets.map(a =>
      `<div class="asset${a === "Capa_Bahia" ? " on" : ""}">${icon("load")}<span>${a}</span></div>`).join("");

    // layer stack
    const layers = [
      { name: "Capa_Bahia", depth: 0, folder: "open", thumbs: ["g"], blend: "Norm", op: 100, on: true },
      { name: "Layer 3", depth: 1, thumbs: ["g"], blend: "Norm", op: 100 },
      { name: "Fill layer 5", depth: 1, fill: true, thumbs: ["g", "g"], blend: "Norm", op: 5 },
      { name: "Fill layer 4", depth: 1, fill: true, thumbs: ["g", "o"], blend: "Norm", op: 100 },
      { name: "Layer 2", depth: 1, thumbs: ["g"], blend: "Norm", op: 100 },
      { name: "Folder 1", depth: 1, folder: "folder", thumbs: ["g", "g"], blend: "Norm", op: 100 },
      { name: "Silk Smooth Red copy 1", depth: 1, fill: true, thumbs: ["g", "o"], blend: "Mul", op: 25 },
      { name: "Listras copy 1", depth: 1, folder: "open", thumbs: ["g"], blend: "Norm", op: 100 },
      { name: "Transform", depth: 2, thumbs: ["o"], blend: "Pthr", op: 100 }
    ];
    const drop = (label, v) =>
      `<span class="mini"><select aria-label="${label}"><option>${v}</option></select>${icon("chev")}</span>`;

    document.getElementById("layers").innerHTML = layers.map(l => `
      <div class="layer${l.on ? " on" : ""}">
        <button class="eye" aria-label="Visibility">${icon("eye")}</button>
        <div class="tree depth-${l.depth}">
          ${l.folder ? icon(l.folder, "folder") : ""}
          ${l.thumbs.map((t, i) => `
            <div class="thumb${i ? " second" : ""}">
              <div class="pic">${icon("load")}${l.fill && !i ? icon("bucket", "badge") : ""}</div>
              <i class="bar ${t === "o" ? "orange" : ""}"></i>
            </div>`).join("")}
          <span class="name">${l.name}</span>
        </div>
        <i class="slot"></i>
        <div class="mix">${drop("Blend mode", l.blend)}${drop("Opacity", l.op)}</div>
      </div>`).join("") + `
      <div class="effect">${icon("eye")}${icon("sub")}<span>Transform</span><button aria-label="Remove">${icon("x")}</button></div>`;
  </script>
</body>
</html>
```
FILE: styles.css
```css
* {
  box-sizing: border-box;
}
body {
  margin: 0;
  height: 100vh;
  overflow: hidden;
  display: flex;
  flex-direction: column;
  background: #333;
  color: #ccc;
  font-family: 'Noto Sans', 'Open Sans', sans-serif;
  font-size: 11px;
  line-height: 16px;
}
button,
select,
input {
  font: inherit;
  color: inherit;
  background: none;
  border: 0;
  padding: 0;
  margin: 0;
}
button {
  display: flex;
  align-items: center;
  justify-content: center;
  flex: none;
}
h2,
p,
ul {
  margin: 0;
  padding: 0;
}
h2 {
  font-family: 'Open Sans', sans-serif;
  font-size: 12px;
  font-weight: 700;
}
svg {
  display: block;
  flex: none;
  width: 16px;
  height: 16px;
}
.sprite {
  position: absolute;
  width: 0;
  height: 0;
}
.end {
  margin-left: auto;
}

/* title + menu */
.titlebar {
  flex: none;
  height: 23px;
  display: flex;
  align-items: center;
  background: #fff;
  color: #000;
  padding: 0 2px;
}
.title {
  flex: 1;
  margin-left: 5px;
}
.titlebar button {
  width: 46px;
  height: 23px;
}
.titlebar button svg {
  width: 12px;
  height: 12px;
  fill: none;
  stroke: #000;
}
.pt-logo text {
  font-size: 8px;
  font-weight: 700;
  fill: #9bea3c;
}
.menubar {
  flex: none;
  height: 24px;
  display: flex;
  gap: 20px;
  padding-left: 10px;
  border-bottom: 1px solid #1c1c1c;
}

/* layout */
.workspace {
  flex: 1;
  min-height: 0;
  display: flex;
}
.rail {
  flex: none;
  width: 36px;
  display: flex;
  flex-direction: column;
  align-items: center;
}
.rail.tools {
  border-right: 1px solid #1c1c1c;
}
.rail.right {
  border-left: 1px solid #1c1c1c;
}
.rail .dots {
  width: 20px;
  height: 6px;
  margin: 16px 0 12px;
}
.rail .dots.mid {
  margin: 6px 0 0;
}
.rail button {
  position: relative;
  width: 34px;
  height: 32px;
}
.dim {
  color: #666;
}
.off {
  color: #4a4a4a;
}
.more {
  position: absolute;
  right: 2px;
  bottom: 1px;
  width: 9px;
  height: 9px;
}
.panel-head {
  height: 32px;
  display: flex;
  align-items: center;
  gap: 14px;
  padding: 0 8px 0 7px;
  background: #2b2b2b;
}
.panel-head h2 {
  flex: 1;
}
.panel-head button {
  width: 16px;
  height: 16px;
}
.panel-head svg {
  width: 10px;
  height: 10px;
}

/* assets */
.assets {
  flex: none;
  width: 488px;
  display: flex;
  flex-direction: column;
  border-right: 2px solid #1c1c1c;
}
.libraries {
  height: 40px;
  gap: 10px;
  padding-left: 14px;
  justify-content: flex-start;
  font-weight: 700;
}
.libraries svg {
  width: 10px;
  height: 10px;
}
.search {
  display: flex;
  align-items: center;
  height: 20px;
  margin: 0 10px;
  padding: 0 0 3px 5px;
  gap: 12px;
  border-bottom: 1px solid #555;
}
.search input {
  flex: 1;
  outline: 0;
}
.search input::placeholder {
  color: #ccc;
}
.filters {
  display: flex;
  gap: 2px;
  margin: 2px 10px 10px;
}
.filters button {
  width: 28px;
  height: 28px;
  border-radius: 3px;
}
.filters .on {
  background: #4a4a4a;
  color: #fff;
}
.shelf {
  flex: 1;
  min-height: 0;
  position: relative;
  overflow: hidden;
  margin: 0 5px;
  background: #252525;
}
.shelf-grid {
  display: flex;
  flex-wrap: wrap;
  margin-top: -36px;
  padding-right: 11px;
}
.asset {
  width: 132px;
  height: 148px;
  padding-top: 8px;
  border: 1px solid transparent;
  text-align: center;
}
.asset svg {
  width: 118px;
  height: 118px;
  margin: 0 auto 5px;
  color: #4b4b4b;
}
.asset.on {
  background: #1a1a1a;
  border-color: #4b87c2;
  color: #fff;
}
.scroll {
  background: #424242;
}
.shelf .scroll {
  position: absolute;
  top: 109px;
  right: 1px;
  width: 10px;
  height: 61px;
}
.assets-foot {
  height: 32px;
  display: flex;
  align-items: center;
  gap: 14px;
  padding: 0 11px;
}

/* viewports */
.stage {
  flex: 1;
  min-width: 0;
  display: flex;
  flex-direction: column;
}
.stage-bar {
  height: 36px;
  display: flex;
  justify-content: flex-end;
  align-items: center;
}
.stage-bar button {
  position: relative;
  width: 32px;
  height: 32px;
  margin-bottom: 2px;
}
.stage-bar .more {
  right: 0;
  bottom: 1px;
}
.sep {
  width: 1px;
  height: 24px;
  margin: 0 5px 0 6px;
  background: #222;
}
.views {
  flex: 1;
  display: flex;
  gap: 2px;
  background: #1c1c1c;
}
.view {
  flex: 1;
  position: relative;
  display: flex;
  justify-content: flex-end;
  align-items: flex-start;
  padding: 9px;
  background: #252525;
}
.drop,
.mini {
  position: relative;
  display: block;
}
.drop select {
  appearance: none;
  width: 100%;
  height: 26px;
  padding: 0 6px;
  border: 1px solid #4f4f4f;
  border-radius: 3px;
  background: #2b2b2b;
}
.drop svg {
  position: absolute;
  right: 5px;
  top: 8px;
  width: 10px;
  height: 10px;
  color: #aaa;
}
.wide {
  width: 164px;
}
.uv-tile {
  position: absolute;
  right: 0;
  bottom: 0;
  width: 550px;
  height: 30%;
  background: #333;
}
.axis {
  position: absolute;
  right: 0;
  bottom: 25px;
  width: 50px;
  height: 50px;
}
.axis text {
  font-size: 8px;
  text-anchor: middle;
}
.progress {
  height: 8px;
  background: #278b77;
}

/* right side */
.side {
  flex: none;
  width: 464px;
  display: flex;
  flex-direction: column;
  border-left: 3px solid #1f1f1f;
}
.side,
.drop,
.statusbar {
  font-family: Roboto, 'Noto Sans', sans-serif;
}
.sets-bar {
  display: flex;
  align-items: center;
  height: 32px;
  gap: 16px;
  padding: 0 4px 4px 6px;
}
.settings {
  width: 74px;
  margin-left: auto;
}
.settings select {
  padding: 0 0 0 1px;
}
.set-list {
  list-style: none;
  margin: 0 4px 10px;
}
.set-list li {
  display: flex;
  align-items: center;
  height: 20px;
  padding: 0 7px 0 4px;
  border-top: 1px solid #0c0c0c;
}
.set-list .on {
  padding: 0 6px 0 3px;
  background: #252525;
  border: 1px solid #4b87c2;
}
.set-list svg {
  width: 12px;
  height: 12px;
  margin-right: 4px;
}
.set-list b {
  flex: 1;
  font-family: 'Open Sans', sans-serif;
  font-size: 12px;
}
.layers {
  border-top: 1px solid #1c1c1c;
}
.tabs {
  display: flex;
  padding-top: 1px;
}
.tab {
  height: 28px;
  gap: 10px;
  padding: 0 4px;
  border-top: 2px solid #252525;
  background: #252525;
  font-family: 'Open Sans', sans-serif;
  font-size: 12px;
  font-weight: 700;
}
.tab.on {
  padding: 0 9px 0 7px;
  border-color: #4b87c2;
  background: none;
  color: #fff;
}
.tab svg {
  width: 10px;
  height: 10px;
}
.layers-bar {
  display: flex;
  align-items: center;
  height: 36px;
  gap: 12px;
  padding: 0 10px 0 4px;
  margin-bottom: 4px;
}
.channel {
  width: 84px;
  margin-right: auto;
}
.layer-scroll {
  display: flex;
  border-top: 1px solid #1c1c1c;
  background: #252525;
}
.layer-list {
  flex: 1;
  background: #333;
}
.layer-scroll .scroll {
  width: 11px;
  height: 179px;
}
.layer {
  display: flex;
  align-items: flex-start;
  height: 47px;
  padding: 0 6px 0 5px;
  border-bottom: 1px solid #1c1c1c;
}
.layer:nth-last-child(2) {
  height: 45px;
  border-bottom: 0;
}
.layer.on {
  padding: 0 5px 0 4px;
  border: 1px solid #4b87c2;
  background: #252525;
}
.layer.on > * {
  margin-top: -1px;
}
.eye {
  height: 40px;
}
.tree {
  flex: 1;
  display: flex;
  align-items: flex-start;
  padding-left: 6px;
}
.depth-1 {
  padding-left: 26px;
}
.depth-2 {
  padding-left: 46px;
}
.folder {
  margin: 13px 4px 0 0;
}
.thumb {
  width: 26px;
  padding-top: 6px;
}
.pic {
  position: relative;
  width: 26px;
  height: 26px;
  padding: 1px;
  border: 1px solid #4f4f4f;
  border-radius: 3px;
  color: #4d4d4d;
}
.on .pic {
  border-color: #4b87c2;
}
.pic svg {
  width: 22px;
  height: 22px;
}
.pic .badge {
  position: absolute;
  right: 3px;
  bottom: 0;
  width: 9px;
  height: 9px;
  color: #ddd;
}
.second {
  margin-left: 4px;
}
.second .pic {
  border-color: transparent;
}
.bar {
  display: block;
  width: 22px;
  height: 5px;
  margin: 5px 2px 0;
  background: #4b4b4b;
}
.bar.orange {
  background: #eb8324;
}
.name {
  margin-left: 5px;
  line-height: 48px;
}
.slot {
  width: 22px;
  height: 22px;
  border: 1px dashed #777;
}
.layer .slot {
  margin: 12px 5px 0 0;
}
.layer.on .slot {
  margin-top: 11px;
}
.mix {
  padding-top: 2px;
}
.mini select {
  appearance: none;
  display: block;
  width: 43px;
  height: 22px;
  padding-right: 12px;
  text-align-last: center;
}
.mini svg {
  position: absolute;
  right: 3px;
  top: 7px;
  width: 8px;
  height: 8px;
  color: #999;
}
.effect {
  display: flex;
  align-items: center;
  height: 30px;
  margin-left: 65px;
  padding: 0 11px 1px 5px;
  border-top: 1px solid #1c1c1c;
}
.effect svg + svg {
  width: 13px;
  height: 14px;
  margin: 0 9px 0 7px;
}
.effect span {
  flex: 1;
}
.effect button svg {
  width: 8px;
  height: 8px;
}
.props {
  flex: 1;
  display: flex;
  flex-direction: column;
  border-top: 2px solid #1c1c1c;
}
.empty {
  padding: 6px 7px;
  color: #666;
}
.activate {
  margin: auto 0 26px 83px;
  color: #868686;
  font-family: 'Noto Sans', sans-serif;
  font-size: 14px;
  line-height: 22px;
}
.activate .big {
  font-size: 19px;
  line-height: 26px;
}

/* status */
.statusbar {
  flex: none;
  height: 22px;
  display: flex;
  align-items: center;
  padding: 0 12px 0 2px;
  border-top: 1px solid #1c1c1c;
}
.warn {
  flex: 1;
  color: #f0a92e;
}
.busy {
  width: 10px;
  height: 10px;
  background: #2bb09a;
}
.job {
  margin: 0 16px 0 6px;
}
.cache {
  margin-right: 9px;
}

/* windows taskbar */
.taskbar {
  flex: none;
  height: 40px;
  display: flex;
  align-items: stretch;
  background: linear-gradient(90deg, #421a20 0, #3d1a20 16%, #201f21 23%, #10242a 30%, #1f2023 36%, #202124 48%, #1e2327 56%, #14252f 66%, #182633 76%, #1a2430 100%);
  color: #fff;
}
.start {
  width: 48px;
  margin-right: 2px;
}
.app {
  width: 49px;
}
.app svg,
.task svg {
  width: 24px;
  height: 24px;
}
.task {
  width: 153px;
  margin: 0 4px;
  gap: 6px;
  padding-left: 4px;
  justify-content: flex-start;
  border-bottom: 2px solid #76b9ed;
}
.task.active {
  width: 161px;
  margin: 0;
  padding-left: 11px;
  background: #465057;
}
.task svg text {
  font-size: 11px;
  fill: #fff;
}
.task .pt-logo {
  width: 22px;
  height: 22px;
}
.task .pt-logo text {
  font-size: 8px;
  fill: #9bea3c;
}
.epic {
  font-size: 9px;
  font-weight: 700;
  fill: #fff;
}
.games {
  font-size: 4px;
  font-weight: 700;
  fill: #fff;
}
.fusion {
  font-size: 15px;
  font-weight: 700;
  fill: #d9822b;
}
.tray {
  margin-left: auto;
  display: flex;
  align-items: center;
  gap: 17px;
}
.tray svg {
  fill: none;
  stroke: #fff;
  stroke-width: 1.2;
}
.tray .news {
  width: 24px;
}
.tray .shield {
  fill: #fff;
}
.tray .cross {
  stroke: #222;
}
.tray .ok {
  fill: #18a34a;
  stroke: none;
}
.clock {
  display: flex;
  flex-direction: column;
  align-items: center;
  line-height: 18px;
}
.tray .note {
  width: 18px;
  height: 18px;
  margin: 0 4px 0 2px;
}
.peek {
  width: 4px;
  height: 40px;
  border-left: 1px solid #667;
}
```
